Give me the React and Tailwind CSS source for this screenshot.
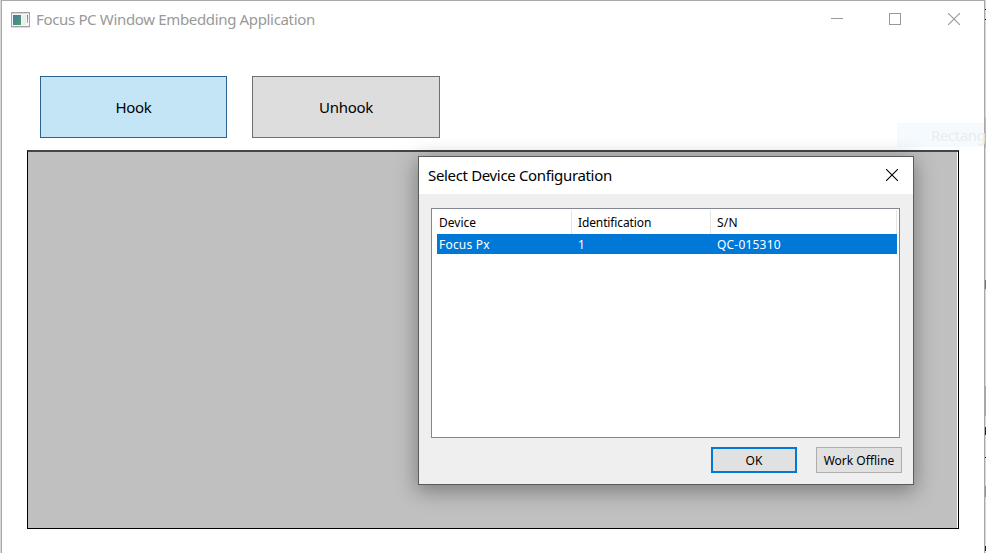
function AppIcon() {
  return (
    <svg width="19" height="16" viewBox="0 0 19 16" shapeRendering="crispEdges">
      <defs>
        <linearGradient id="pane" x1="0" y1="0" x2="1" y2="1">
          <stop offset="0" stopColor="#4677a8" />
          <stop offset="1" stopColor="#4fa067" />
        </linearGradient>
        <linearGradient id="side" x1="0" y1="0" x2="0" y2="1">
          <stop offset="0" stopColor="#4a78b0" />
          <stop offset="1" stopColor="#8fc49c" />
        </linearGradient>
      </defs>
      <rect x="0.5" y="0.5" width="18" height="14" fill="#f6f7f8" stroke="#a0a4a8" />
      <rect x="1" y="1" width="17" height="1" fill="#d4d7da" />
      <rect x="2" y="3" width="8" height="10" fill="url(#pane)" />
      <rect x="11" y="3" width="4" height="10" fill="#eceeef" />
      <rect x="16" y="3" width="1" height="8" fill="url(#side)" />
      <rect x="0" y="15" width="19" height="1" fill="#dcdcdc" />
    </svg>
  );
}

function CloseIcon({ className }) {
  return (
    <svg width="12" height="12" viewBox="0 0 12 12" className={className}>
      <path d="M0 0 L12 12 M12 0 L0 12" stroke="currentColor" strokeWidth="1.1" fill="none" />
    </svg>
  );
}

function Dialog() {
  return (
    <section className="absolute left-[418px] top-[156px] flex h-[329px] w-[496px] flex-col border border-[#5c5c5c] bg-[#efefef] shadow-[0_5px_20px_1px_rgba(0,0,0,0.36)]">
      <header className="flex h-[37px] shrink-0 items-center justify-between bg-white pl-[9px] pr-[15px]">
        <h2 className="whitespace-nowrap text-[15px] tracking-[-0.34px] text-black">Select Device Configuration</h2>
        <CloseIcon className="mb-px text-black" />
      </header>
      <div className="ml-3 mt-[14px] h-[230px] w-[469px] shrink-0 border border-[#828790] bg-white pl-[5px] pr-[2px] pt-px text-[12px] leading-[20px]">
        <div className="grid h-6 grid-cols-[135px_139px_186px] items-stretch text-black">
          <div className="border-r border-[#e5e5e5] pl-[2px] pt-[3px]">Device</div>
          <div className="border-r border-[#e5e5e5] pl-[6px] pt-[3px] tracking-[-0.12px]">Identification</div>
          <div className="border-r border-[#e5e5e5] pl-[6px] pt-[3px] tracking-[0.2px]">S/N</div>
        </div>
        <div className="grid h-5 grid-cols-[135px_139px_186px] bg-[#0078d7] leading-[22px] tracking-[0.2px] text-white">
          <div className="pl-[2px]">Focus Px</div>
          <div className="pl-[6px]">1</div>
          <div className="pl-[6px]">QC-015310</div>
        </div>
      </div>
      <footer className="mt-[9px] flex gap-[19px] pl-[292px] text-[12px] text-black">
        <button className="h-[26px] w-[86px] border-2 border-[#0078d7] bg-[#e1e1e1] pt-[2px] leading-[18px]">OK</button>
        <button className="h-[26px] w-[86px] whitespace-nowrap border border-[#adadad] bg-[#e1e1e1] pt-[2px] leading-[18px]">Work Offline</button>
      </footer>
    </section>
  );
}

export default function App() {
  return (
    <div className="relative flex h-[553px] w-[986px] overflow-hidden bg-[#d8d8d8] pl-px font-['Noto_Sans','Open_Sans',sans-serif]">
      <main className="flex w-[984px] shrink-0 flex-col border-x border-t border-[#a9a9a9] bg-white">
        <header className="flex h-[37px] shrink-0 items-center pl-[9px] pr-6 text-[#999999]">
          <AppIcon />
          <h1 className="ml-[6px] whitespace-nowrap text-[15px] tracking-[-0.34px]">Focus PC Window Embedding Application</h1>
          <div className="mb-px ml-auto flex items-center">
            <svg width="12" height="12" viewBox="0 0 12 12" shapeRendering="crispEdges">
              <path d="M0 5.5 H12" stroke="currentColor" />
            </svg>
            <svg width="12" height="12" viewBox="0 0 12 12" shapeRendering="crispEdges" className="ml-[46px]">
              <rect x="0.5" y="0.5" width="11" height="11" fill="none" stroke="currentColor" />
            </svg>
            <CloseIcon className="ml-[47px]" />
          </div>
        </header>
        <div className="flex h-[112px] shrink-0 pl-[38px] pt-[38px] text-[15px] text-black">
          <button className="h-[62px] w-[187px] border border-[#2c628b] bg-[#c4e5f6] tracking-[-0.3px]">Hook</button>
          <button className="ml-[25px] h-[62px] w-[188px] border border-[#707070] bg-[#dddddd] tracking-[-0.3px]">Unhook</button>
          <div className="ml-auto mt-[47px] flex h-6 w-[87px] items-center bg-[#f5fafe] pl-[34px] tracking-[-0.4px] text-[#ececec]">Rectang</div>
        </div>
        <div className="ml-[25px] h-[379px] w-[932px] shrink-0 border border-t-2 border-black border-t-[#454545] bg-white pr-px">
          <div className="h-full bg-[#c0c0c0]" />
        </div>
      </main>
      <aside className="flex w-px flex-col">
        <div className="mt-[9px] h-px bg-black" />
        <div className="mt-[9px] h-px bg-black" />
        <div className="mt-[98px] h-[30px] bg-[#a9bfd4]" />
        <div className="mt-[132px] h-[9px] bg-[#8c6a4c]" />
        <div className="mt-[97px] h-[30px] bg-[#a6a6a6]" />
        <div className="mt-[11px] h-[8px] bg-[#2d2320]" />
        <div className="mt-[22px] h-px bg-black" />
        <div className="mt-[28px] h-[11px] bg-[#6e9bd0]" />
        <div className="mt-[49px] h-[5px] bg-[#3d1010]" />
      </aside>
      <Dialog />
    </div>
  );
}
